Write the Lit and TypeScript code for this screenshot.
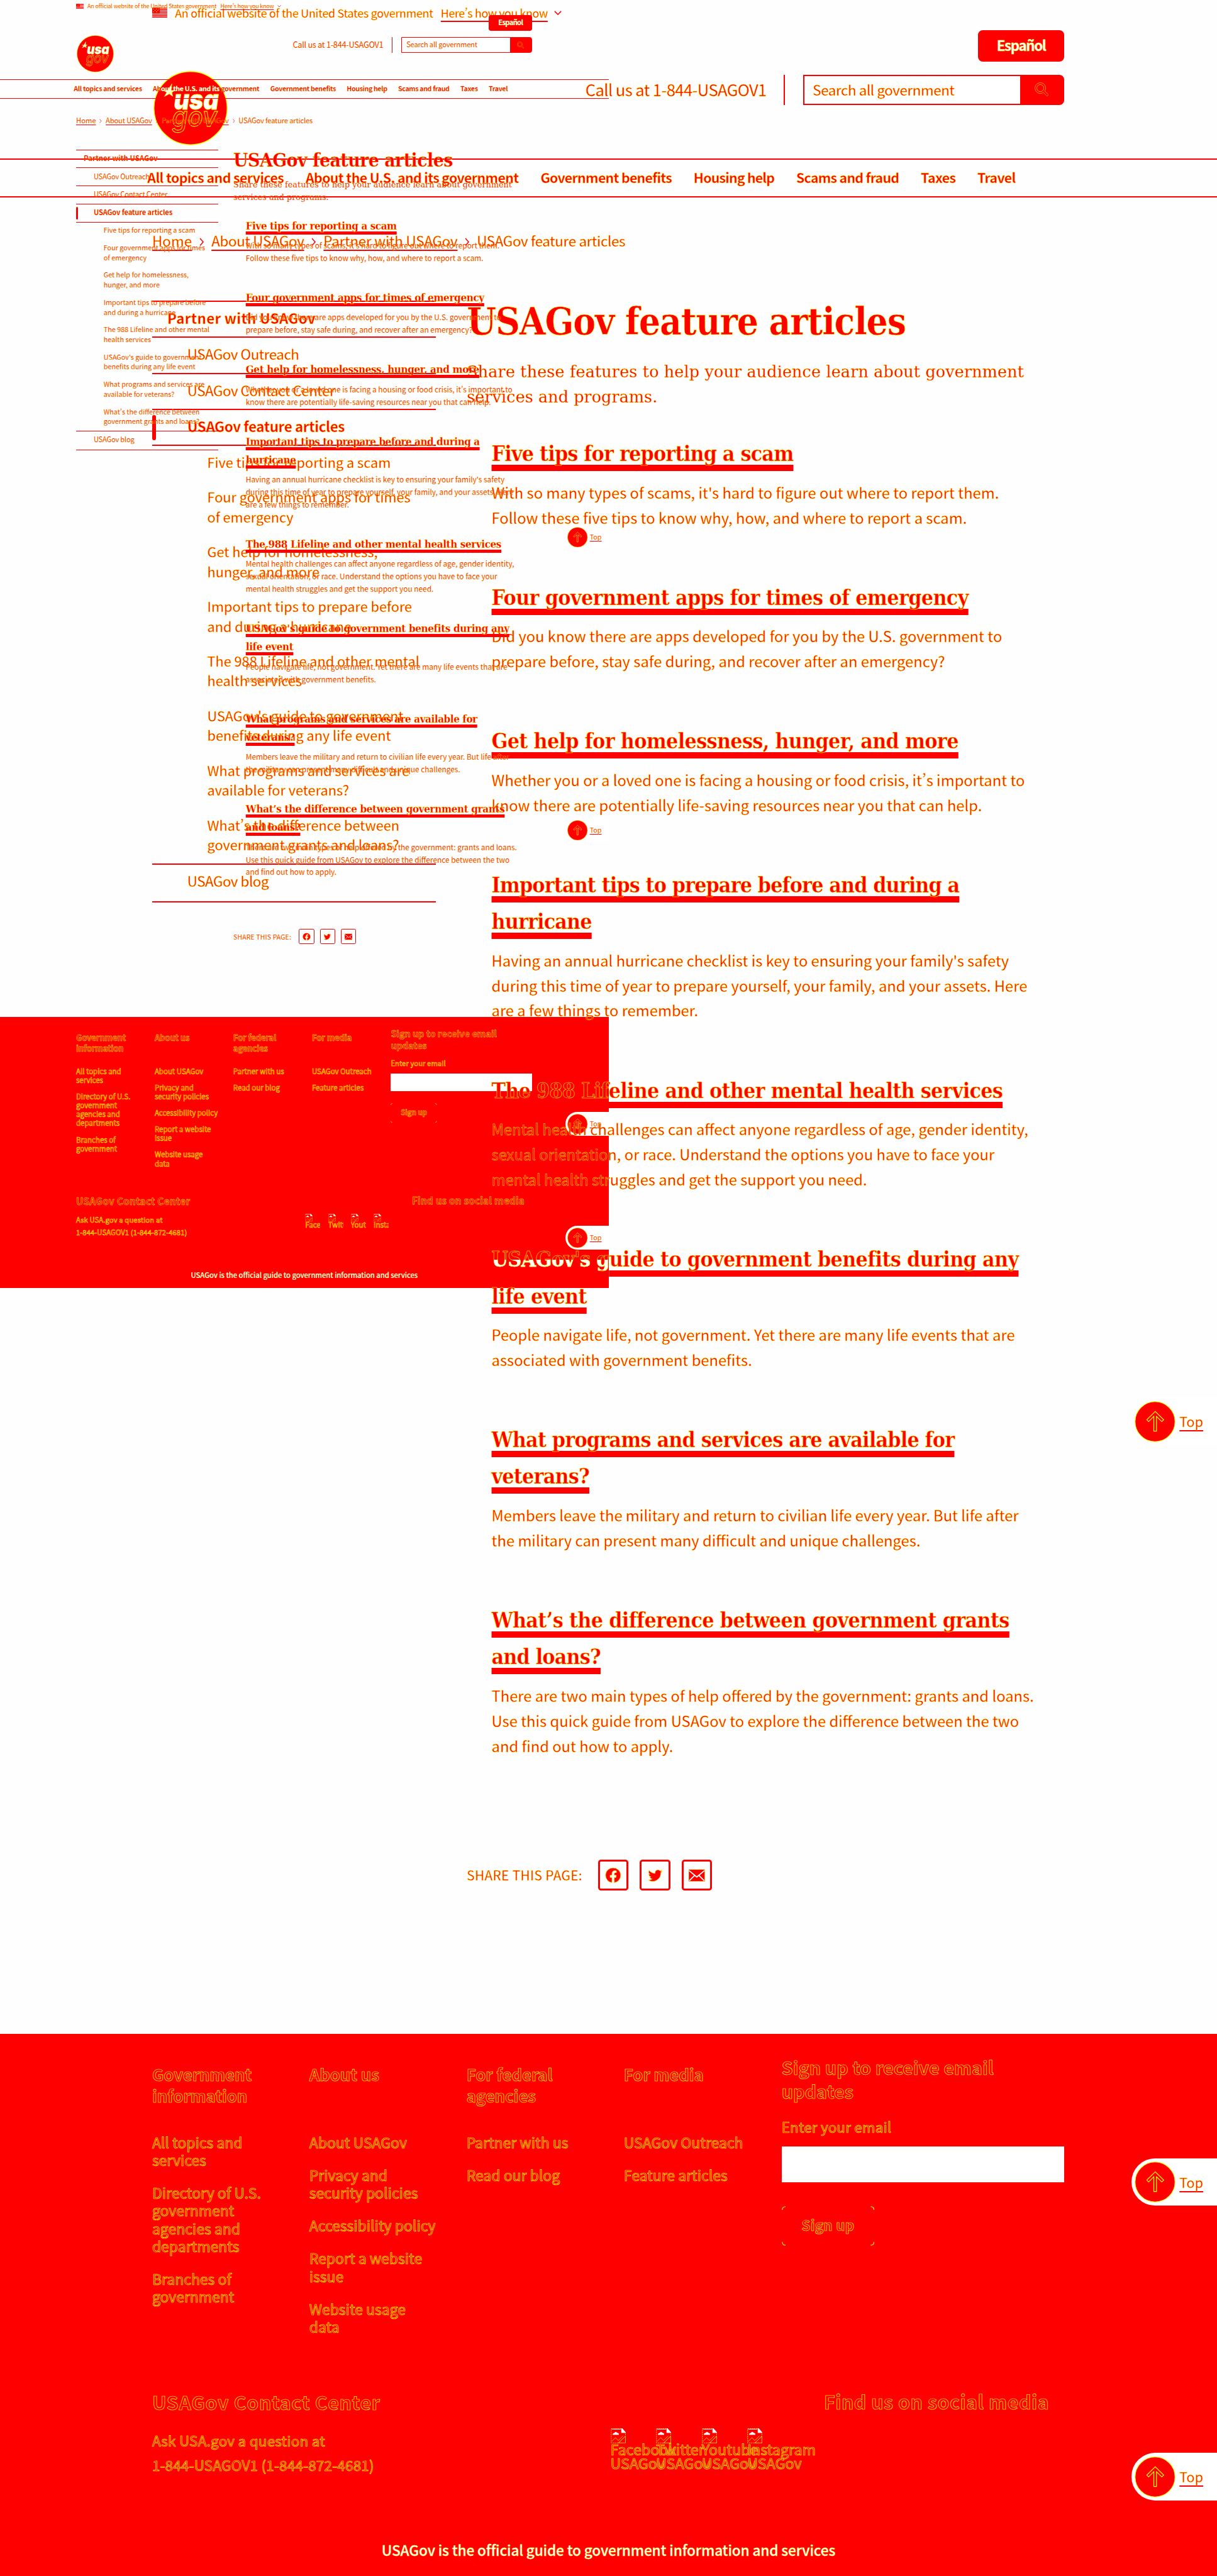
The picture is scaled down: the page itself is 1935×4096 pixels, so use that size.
import { LitElement, html, svg, css, nothing } from "lit";
import { customElement, property } from "lit/decorators.js";

const NAV: [string, number][] = [
  ["All topics and services", 143.5],
  ["About the U.S. and its government", 224],
  ["Government benefits", 138],
  ["Housing help", 85],
  ["Scams and fraud", 108],
  ["Taxes", 36.5],
  ["Travel", 40],
];

const SUBNAV = [
  ["Five tips for reporting a scam"],
  ["Four government apps for times", "of emergency"],
  ["Get help for homelessness,", "hunger, and more"],
  ["Important tips to prepare before", "and during a hurricane"],
  ["The 988 Lifeline and other mental", "health services"],
  ["USAGov's guide to government", "benefits during any life event"],
  ["What programs and services are", "available for veterans?"],
  ["What’s the difference between", "government grants and loans?"],
];

interface Article {
  title: [string, number][];
  text: string[];
}

const ARTICLES: Article[] = [
  {
    title: [["Five tips for reporting a scam", 317.5]],
    text: ["With so many types of scams, it's hard to figure out where to report them.", "Follow these five tips to know why, how, and where to report a scam."],
  },
  {
    title: [["Four government apps for times of emergency", 501.5]],
    text: ["Did you know there are apps developed for you by the U.S. government to", "prepare before, stay safe during, and recover after an emergency?"],
  },
  {
    title: [["Get help for homelessness, hunger, and more", 491]],
    text: ["Whether you or a loved one is facing a housing or food crisis, it’s important to", "know there are potentially life-saving resources near you that can help."],
  },
  {
    title: [["Important tips to prepare before and during a", 492], ["hurricane", 105.3]],
    text: ["Having an annual hurricane checklist is key to ensuring your family's safety", "during this time of year to prepare yourself, your family, and your assets. Here", "are a few things to remember."],
  },
  {
    title: [["The 988 Lifeline and other mental health services", 537.5]],
    text: ["Mental health challenges can affect anyone regardless of age, gender identity,", "sexual orientation, or race. Understand the options you have to face your", "mental health struggles and get the support you need."],
  },
  {
    title: [["USAGov's guide to government benefits during any", 552.6], ["life event", 100]],
    text: ["People navigate life, not government. Yet there are many life events that are", "associated with government benefits."],
  },
  {
    title: [["What programs and services are available for", 486.8], ["veterans?", 102.8]],
    text: ["Members leave the military and return to civilian life every year. But life after", "the military can present many difficult and unique challenges."],
  },
  {
    title: [["What’s the difference between government grants", 543.8], ["and loans?", 114.7]],
    text: ["There are two main types of help offered by the government: grants and loans.", "Use this quick guide from USAGov to explore the difference between the two", "and find out how to apply."],
  },
];

const FOOTER: { head: string[]; links: string[][] }[] = [
  { head: ["Government", "information"], links: [["All topics and", "services"], ["Directory of U.S.", "government", "agencies and", "departments"], ["Branches of", "government"]] },
  { head: ["About us"], links: [["About USAGov"], ["Privacy and", "security policies"], ["Accessibility policy"], ["Report a website", "issue"], ["Website usage", "data"]] },
  { head: ["For federal", "agencies"], links: [["Partner with us"], ["Read our blog"]] },
  { head: ["For media"], links: [["USAGov Outreach"], ["Feature articles"]] },
];

const lines = (rows: string[]) => rows.map((r) => html`<span class="line">${r}</span>`);

@customElement("usa-page")
export class UsaPage extends LitElement {
  @property({ type: Boolean, reflect: true }) compact = false;
  @property({ attribute: false }) tops: number[] = [];

  static styles = css`
    :host {
      display: flex;
      flex-direction: column;
      width: 1280px;
      height: 2710px;
      position: relative;
      zoom: 1.51172;
      font: 400 14.8px/20.8px "Noto Sans CJK SC", "Open Sans", sans-serif;
      font-variant-east-asian: proportional-width;
      color: #f00;
      -webkit-text-stroke: 0.28px #ff0;
      white-space: nowrap;
      z-index: 1;
    }
    :host([compact]) { zoom: 0.75586; z-index: auto; }
    .upper { display: flex; flex-direction: column; height: 2139px; flex: none; }
    :host([compact]) .upper { position: relative; z-index: 2; }
    .line { display: block; }
    .u { text-decoration: underline 1.3px #f00; text-underline-offset: 3px; text-decoration-skip-ink: none; }
    .bold { font-weight: 700; }
    .banner { height: 27px; padding-left: 160px; display: flex; align-items: center; gap: 8px; font-size: 11.8px; }
    .flag { width: 16px; height: 11px; display: block; }
    .banner .chev { width: 8px; height: 5px; margin-left: -1px; }
    .head { height: 140px; padding: 0 160.5px 0 161.5px; display: flex; justify-content: space-between; align-items: flex-start; }
    .logo { width: 78px; height: 78px; margin-top: 47.5px; display: block; }
    .tools { display: flex; flex-direction: column; align-items: flex-end; padding-top: 5px; }
    .lang { width: 91px; height: 33px; border-radius: 5px; background: #f00; color: #fff; display: flex; align-items: center; justify-content: center; font-weight: 700; }
    .lang span { margin-top: -2px; }
    .row { display: flex; align-items: center; height: 32px; margin-top: 13.5px; }
    .call { font-size: 17px; border-right: 1.5px solid #f00; padding-right: 18px; height: 32px; line-height: 30.5px; }
    .search { margin-left: 19px; display: flex; width: 275px; height: 32px; box-sizing: border-box; border: 1.35px solid #f00; border-radius: 0 5px 5px 0; background: #f00; }
    .field { width: 227px; background: #fff; padding-left: 9px; box-sizing: border-box; line-height: 29px; }
    .go { flex: 1; display: flex; align-items: center; justify-content: center; }
    .go svg { width: 15px; height: 15px; }
    .nav { height: 41px; box-sizing: border-box; border-top: 1.35px solid #f00; border-bottom: 1.35px solid #f00; padding-left: 155px; display: flex; gap: 23px; line-height: 37.5px; font-weight: 700; font-size: 14.1px; }
    .ghost { color: #fff; }
    .crumbs { padding: 33px 0 0 160px; display: flex; gap: 7.7px; line-height: 24px; height: 23px; }
    .crumbs svg { width: 5px; height: 9px; margin-top: 9px; }
    .main { display: grid; grid-template-columns: 298.5px 1fr; column-gap: 32.5px; padding: 52px 0 0 160px; }
    :host([compact]) .main { padding-top: 50.5px; }
    .item { border-top: 1.35px solid #f00; padding: 6.8px 0 9.1px 37px; }
    .item.first { padding-left: 16px; }
    .item.here { position: relative; font-weight: 700; }
    .item.here::before { content: ""; position: absolute; left: 0; top: 5px; bottom: 5px; width: 4px; border-radius: 2px; background: #f00; }
    .sub { border-top: 1.35px solid #f00; font-size: 14.35px; }
    .sub div { padding: 6.2px 0 9.7px 58px; }
    .sub + .item { padding-bottom: 10.5px; }
    .last { border-bottom: 1.35px solid #f00; }
    h1 { margin: 0; font: 700 39.5px/44px "DejaVu Serif Condensed", "DejaVu Serif", serif; -webkit-text-stroke-width: 0.4px; }
    .intro { margin: 17.5px 0 26.8px; font: 400 16.8px/26.8px "DejaVu Serif", serif; -webkit-text-stroke-width: 0.2px; }
    .art { padding: 0 0 51.8px 26px; }
    h2 { margin: 0 0 8px; font: 700 22.3px/38.6px "DejaVu Serif Condensed", "DejaVu Serif", serif; -webkit-text-stroke-width: 0.35px; text-decoration: underline 6.8px #f00; text-underline-offset: 3.7px; text-decoration-skip-ink: none; }
    .art p { margin: 0; line-height: 26.4px; font-size: 15.72px; }
    .crossing { color: transparent; background: linear-gradient(#f00 52%, #fff 52%); background-clip: text; -webkit-background-clip: text; }
    .share { display: flex; align-items: center; margin-top: 55.2px; height: 32px; }
    .share .t { margin-right: 16.5px; font-size: 13.8px; }
    .box { width: 32px; height: 32px; box-sizing: border-box; border: 2px solid #f00; border-radius: 3px; margin-right: 12px; display: flex; align-items: center; justify-content: center; }
    .box svg { width: 17px; height: 17px; }
    .footer { position: relative; z-index: 0; height: 571px; background: #f00; flex: none; -webkit-text-stroke-width: 0.45px; }
    :host([compact]) .footer { -webkit-text-stroke-width: 0.62px; }
    .cols { height: 373.5px; box-sizing: border-box; padding: 23px 0 0 160px; display: grid; grid-template-columns: 165.3px 165.3px 165.5px 166px 297px; }
    .col { padding-top: 8.4px; }
    .fh { height: 45px; line-height: 22.5px; font-size: 17px; font-weight: 700; margin-bottom: 28.2px; }
    .fl { line-height: 18.7px; margin-bottom: 15.8px; font-size: 15.2px; }
    .mailh { font-weight: 700; font-size: 19px; line-height: 24.8px; }
    .label { margin: 14.7px 0 11.4px; line-height: 20px; }
    .input { height: 37.7px; background: #fff; }
    .btn { margin-top: 25.2px; width: 97.5px; height: 41.5px; position: relative; display: flex; align-items: center; justify-content: center; font-weight: 700; }
    .btn span { margin-top: -2px; }
    .btn svg { position: absolute; inset: 0; width: 100%; height: 100%; }
    .contact { padding-left: 160px; display: grid; grid-template-columns: 482px 1fr; height: 160px; }
    .ch { font-size: 20px; line-height: 28px; font-weight: 700; margin-bottom: 13.3px; }
    .contact p { margin: 0; line-height: 26.2px; }
    .social { display: flex; gap: 16px; }
    .soc { width: 32px; line-height: 14.5px; font-size: 15.4px; }
    .soc svg { display: block; width: 16px; height: 16px; margin-bottom: -0.5px; }
    :host([compact]) .soc { overflow: hidden; height: 34px; }
    .find { font-size: 20px; line-height: 28px; font-weight: 700; padding-left: 224.5px; margin: -1px 0 14.5px; }
    .base { text-align: center; color: #fff; font-weight: 500; line-height: 20px; font-size: 15px; -webkit-text-stroke-width: 0.25px; }
    .top { position: absolute; right: 0; width: 90px; height: 50px; margin-top: -25px; box-sizing: border-box; background: #fff; border-radius: 25px 0 0 25px; display: flex; align-items: center; padding-left: 3.5px; gap: 4px; font-size: 14.2px; z-index: 0; }
    .top svg { width: 43px; height: 43px; flex: none; }
  `;

  updated() {
    const base = this.getBoundingClientRect().width / 1280;
    this.renderRoot.querySelectorAll<HTMLElement>("[data-w]").forEach((el) => {
      el.style.letterSpacing = "0";
      const w = el.getBoundingClientRect().width / base;
      const n = (el.textContent ?? "").length;
      el.style.letterSpacing = `${(Number(el.dataset.w) - w) / n}px`;
    });
  }

  private fit(text: unknown, w: number, cls = "") {
    return html`<span class=${cls} data-w=${w}>${text}</span>`;
  }

  private navItem(text: string, w: number, i: number) {
    if (this.compact && i === 1) return this.fit(html`Ab<span class="ghost">out the U.S. and its</span> government`, w);
    return this.fit(text, w);
  }

  private titleLine(text: string, w: number, i: number, j: number) {
    if (!this.compact && i === 5 && j === 0) return this.fit(html`<span class="crossing">${text.slice(0, 10)}</span>${text.slice(10)}`, w);
    return this.fit(text, w);
  }

  private chevron() {
    return html`<svg viewBox="0 0 5 9"><path d="M.7.7 4 4.500.7 8.300" fill="none" stroke="#f00" stroke-width="1" /></svg>`;
  }

  private logo() {
    return html`<svg class="logo" viewBox="0 0 78 78">
      <circle cx="39" cy="39" r="38.500" fill="#f00" stroke="#ff0" stroke-width=".9" />
      <path d="m19.300 13.500-.8 7 4-.2-3 2.200-8 4.200 2.500-4.200-3-2 4 .2zM19 20.500l1.200 6-4.200-3z" fill="#fff" stroke="#ff0" stroke-width=".5" />
      <g font-family="Inter, sans-serif" font-style="italic" font-size="29">
        <text x="21.500" y="40.300" font-weight="900" fill="#fff" stroke="#ff0" stroke-width=".5" textLength="47" lengthAdjust="spacingAndGlyphs">usa</text>
        <text x="19.500" y="58" font-weight="500" fill="#f00" stroke="#ff0" stroke-width=".6" textLength="47.500" lengthAdjust="spacingAndGlyphs">gov</text>
      </g>
    </svg>`;
  }

  private flag() {
    return html`<svg class="flag" viewBox="0 0 16 11">
      <rect width="16" height="11" fill="#fff" />
      ${[0, 1, 2, 3, 4, 5, 6].map((i) => svg`<rect y=${i * 1.6} width="16" height="1" fill="#f00" />`)}
      <rect width="8" height="6" fill="#f00" />
      <path d="M1 1.500h1m2 0h1m1.500 0h1M2.500 3h1m2 0h1M1 4.500h1m2 0h1" stroke="#ff0" stroke-width=".6" />
    </svg>`;
  }

  render() {
    return html`
      <div class="upper">
        <div class="banner">
          ${this.flag()}${this.fit("An official website of the United States government", 271.5)}
          ${this.fit("Here’s how you know", 112.5, "u")}
          <svg class="chev" viewBox="0 0 8 5"><path d="m.6.6 3.400 3.400L7.400.6" fill="none" stroke="#f00" /></svg>
        </div>
        <div class="head">
          ${this.logo()}
          <div class="tools">
            <div class="lang">${this.fit("Español", 51.5)}</div>
            <div class="row">
              <div class="call">${this.fit("Call us at 1-844-USAGOV1", 190.5)}</div>
              <div class="search">
                <div class="field">${this.fit("Search all government", 149)}</div>
                <div class="go"><svg viewBox="0 0 15 15"><path d="M6 .4a5.600 5.600 0 1 0 3.200 10.200l3.900 3.900 1.500-1.500-3.900-3.900A5.600 5.600 0 0 0 6 .4Zm0 1.900a3.700 3.700 0 1 1 0 7.400 3.700 3.700 0 0 1 0-7.400Z" fill="none" stroke="#ff0" stroke-width=".4" /></svg></div>
              </div>
            </div>
          </div>
        </div>
        <div class="nav">${NAV.map(([t, w], i) => this.navItem(t, w, i))}</div>
        <div class="crumbs">
          ${this.fit("Home", 42, "u")}${this.chevron()}${this.fit("About USAGov", 97.5, "u")}${this.chevron()}${this.fit("Partner with USAGov", 141, "u")}${this.chevron()}${this.fit("USAGov feature articles", 156)}
        </div>
        <div class="main">
          <div class="side">
            <div class="item first bold">${this.fit("Partner with USAGov", 156)}</div>
            <div class="item">${this.fit("USAGov Outreach", 117.5)}</div>
            <div class="item">${this.fit("USAGov Contact Center", 155)}</div>
            <div class="item here">${this.fit("USAGov feature articles", 165.5)}</div>
            <div class="sub">${SUBNAV.map((s) => html`<div>${lines(s)}</div>`)}</div>
            <div class="item last">${this.fit("USAGov blog", 85.5)}</div>
          </div>
          <div>
            <h1>${this.fit("USAGov feature articles", 461.5)}</h1>
            <div class="intro">
              <div>${this.fit("Share these features to help your audience learn about government", 586)}</div>
              <div>${this.fit("services and programs.", 200.5)}</div>
            </div>
            ${ARTICLES.map(
              (a, i) => html`<div class="art">
                <h2>${a.title.map(([t, w], j) => html`<div>${this.titleLine(t, w, i, j)}</div>`)}</h2>
                <p>${lines(a.text)}</p>
              </div>`
            )}
            <div class="share">
              <span class="t">${this.fit("SHARE THIS PAGE:", 121.5)}</span>
              <span class="box"><svg viewBox="0 0 24 24"><path d="M12 1a11 11 0 0 0-1.700 21.900v-7.700H7.500V12h2.800V9.500c0-2.800 1.600-4.300 4.200-4.300 1.200 0 2.400.2 2.400.2v2.700h-1.400c-1.300 0-1.800.8-1.800 1.700V12h3l-.5 3.200h-2.500v7.700A11 11 0 0 0 12 1Z" fill="#f00" stroke="#ff0" stroke-width=".6" /></svg></span>
              <span class="box"><svg viewBox="0 0 24 24"><path d="M22.500 5.900c-.8.3-1.600.6-2.500.7.900-.5 1.600-1.400 1.900-2.400-.8.5-1.800.9-2.700 1.100a4.300 4.300 0 0 0-7.400 3.900A12.200 12.200 0 0 1 2.900 4.700a4.300 4.300 0 0 0 1.300 5.800c-.7 0-1.400-.2-2-.5 0 2.100 1.500 3.900 3.500 4.300-.6.200-1.300.2-2 .1a4.300 4.300 0 0 0 4 3A8.700 8.700 0 0 1 1.400 19a12.200 12.200 0 0 0 18.800-10.900c.9-.6 1.700-1.300 2.300-2.200Z" fill="#f00" stroke="#ff0" stroke-width=".6" /></svg></span>
              <span class="box"><svg viewBox="0 0 24 24"><rect x="0" y="3.500" width="24" height="17.500" fill="#f00" stroke="#ff0" stroke-width=".5" /><path d="m.5 5 11.500 9.500L23.500 5M1 20l8-8M23 20l-8-8" fill="none" stroke="#fff" stroke-width="1.600" /></svg></span>
            </div>
          </div>
        </div>
      </div>
      <div class="footer">
        <div class="cols">
          ${FOOTER.map((c) => html`<div class="col"><div class="fh">${lines(c.head)}</div>${c.links.map((l) => html`<div class="fl">${lines(l)}</div>`)}</div>`)}
          <div>
            <div class="mailh"><div>${this.fit("Sign up to receive email", 223)}</div><div>${this.fit("updates", 75.5)}</div></div>
            <div class="label">${this.fit("Enter your email", 115.5)}</div>
            <div class="input"></div>
            <div class="btn">
              <svg viewBox="0 0 97.500 41.500"><path d="M.5 4q0-3.500 3.500-3.500M93.500.5Q97 .5 97 4M97 37.500q0 3.500-3.500 3.500M4 41Q.5 41 .5 37.500" fill="none" stroke="#ff0" stroke-width=".8" /></svg>
              ${this.fit("Sign up", 55.5)}
            </div>
          </div>
        </div>
        <div class="contact">
          <div>
            <div class="ch">${this.fit("USAGov Contact Center", 240)}</div>
            <p>${this.fit("Ask USA.gov a question at", 182)}</p>
            <p>${this.fit("1-844-USAGOV1 (1-844-872-4681)", 233.5)}</p>
          </div>
          <div>
            <div class="find">${this.fit("Find us on social media", 237)}</div>
            <div class="social">
              ${["Facebook", "Twitter", "Youtube", "Instagram"].map(
                (n) => html`<div class="soc">
                  <svg viewBox="0 0 16 16"><path d="M.5.5h10.500l4.500 4.500v3l-7 7.500h-8z" fill="#f00" stroke="#ff0" stroke-width=".5" stroke-dasharray="1.500 .7" /><path d="M1 1h9.500M11.500 0v4.500h4z" stroke="#fff" fill="#fff" stroke-width=".8" /><path d="M2 7q0-2 2-2 1-2.500 3 0 2 0 1.500 2z" fill="#fff" /><path d="m1 14 4-4 3 3 5-5M8 15.500l7.500-7v7z" fill="none" stroke="#ff0" stroke-width=".5" /></svg>
                  <span class="line">${n}</span>${this.compact ? nothing : html`<span class="line">USAGov</span>`}
                </div>`
              )}
            </div>
          </div>
        </div>
        <div class="base">${this.fit("USAGov is the official guide to government information and services", 477)}</div>
      </div>
      ${this.tops.map(
        (y) => html`<div class="top" style="top:${y}px">
          <svg viewBox="0 0 43 43"><circle cx="21.500" cy="21.500" r="21" fill="#f00" stroke="#ff0" stroke-width=".7" /><path d="M20.200 31.500V16l-5.400 5.400-2-1.900 8.900-8.700 8.900 8.700-2 1.900L23 16v15.500z" fill="none" stroke="#ff0" stroke-width=".8" /></svg>
          ${this.fit("Top", 25, "u")}
        </div>`
      )}
    `;
  }
}

@customElement("app-root")
export class AppRoot extends LitElement {
  static styles = css`
    :host { display: block; width: 1935px; height: 4096px; overflow: hidden; background: #fefefe; }
    .stack { display: grid; isolation: isolate; justify-items: start; align-items: start; }
    .stack > * { grid-area: 1 / 1; }
  `;

  render() {
    return html`<div class="stack">
      <usa-page compact .tops=${[1129.6, 1746.5, 2364.5, 2604]}></usa-page>
      <usa-page .tops=${[1495, 2295, 2605]}></usa-page>
    </div>`;
  }
}
